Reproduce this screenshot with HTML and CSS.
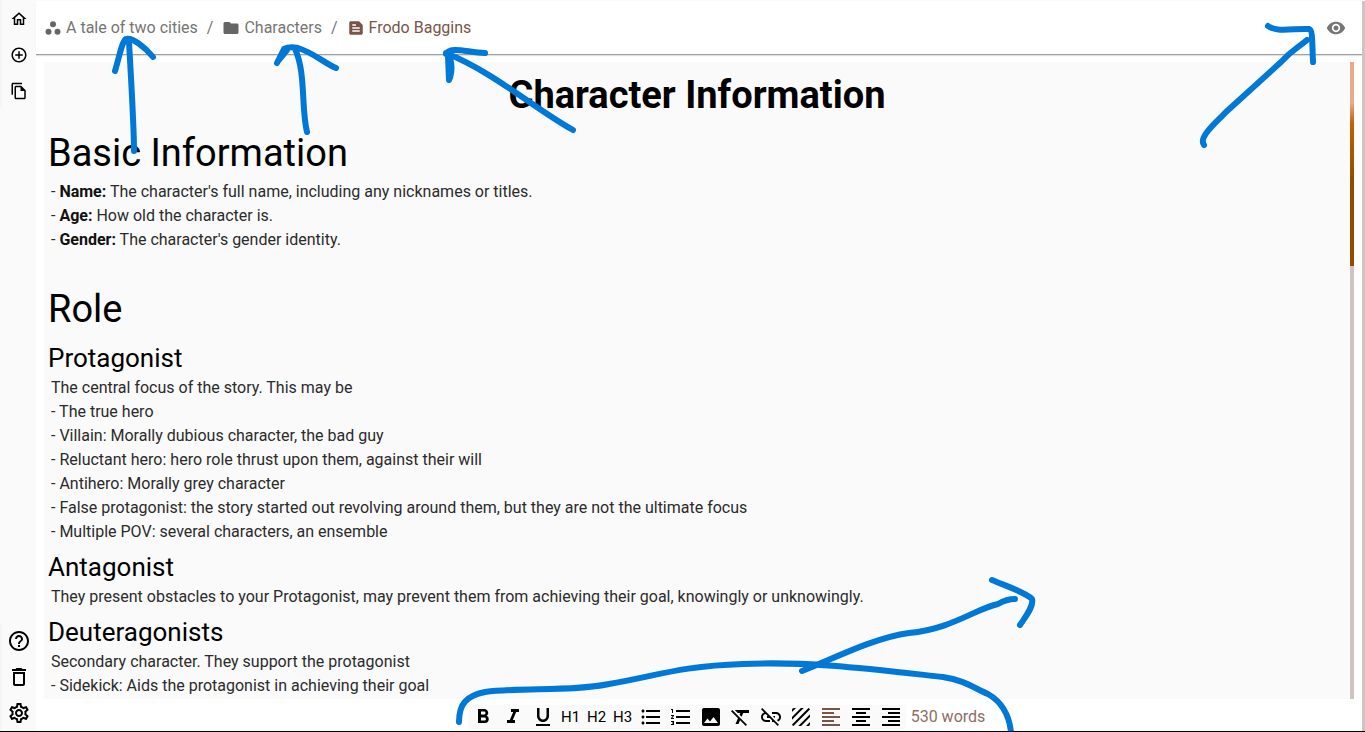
FILE: index.html
```html
<!DOCTYPE html>
<html lang="en">
<head>
<meta charset="utf-8">
<title>Frodo Baggins</title>
<link rel="stylesheet" href="styles.css">
</head>
<body>
<div class="app">
  <nav class="sidebar" aria-label="Main">
    <div class="side-group side-top">
      <button class="side-btn" aria-label="Home"><svg class="icon-sm" viewBox="0 0 24 24"><path d="M12 5.700l5 4.500V18h-2v-6H9v6H7v-7.800l5-4.500M12 3L2 12h3v8h6v-6h2v6h6v-8h3L12 3z"/></svg></button>
      <button class="side-btn" aria-label="Add"><svg class="icon-sm" viewBox="0 0 24 24"><path d="M13 7h-2v4H7v2h4v4h2v-4h4v-2h-4V7zm-1-5C6.500 2 2 6.500 2 12s4.500 10 10 10 10-4.500 10-10S17.500 2 12 2zm0 18c-4.400 0-8-3.600-8-8s3.600-8 8-8 8 3.600 8 8-3.600 8-8 8z"/></svg></button>
      <button class="side-btn" aria-label="Copy"><svg class="icon-sm" viewBox="0 0 24 24"><path d="M16 1H4c-1.100 0-2 .9-2 2v14h2V3h12V1zm-1 4H8c-1.100 0-2 .9-2 2v14c0 1.100.9 2 2 2h11c1.100 0 2-.9 2-2V11l-6-6zM8 21V7h6v5h5v9H8z"/></svg></button>
    </div>
    <div class="side-group side-bottom">
      <button class="side-btn" aria-label="Help"><svg class="icon" viewBox="0 0 24 24"><path d="M11 18h2v-2h-2v2zm1-16C6.480 2 2 6.480 2 12s4.480 10 10 10 10-4.480 10-10S17.520 2 12 2zm0 18c-4.410 0-8-3.590-8-8s3.590-8 8-8 8 3.590 8 8-3.590 8-8 8zm0-14c-2.210 0-4 1.790-4 4h2c0-1.100.9-2 2-2s2 .9 2 2c0 2-3 1.750-3 5h2c0-2.250 3-2.500 3-5 0-2.210-1.790-4-4-4z"/></svg></button>
      <button class="side-btn" aria-label="Delete"><svg class="icon" viewBox="0 0 24 24"><path d="M6 19c0 1.100.9 2 2 2h8c1.100 0 2-.9 2-2V7H6v12zM8 9h8v10H8V9zm7.500-5l-1-1h-5l-1 1H5v2h14V4h-3.500z"/></svg></button>
      <button class="side-btn" aria-label="Settings"><svg class="icon" viewBox="0 0 24 24"><path d="M19.430 12.980c.04-.32.07-.64.07-.98s-.03-.66-.07-.98l2.110-1.650c.19-.15.24-.42.12-.64l-2-3.460c-.12-.22-.39-.3-.61-.22l-2.490 1c-.52-.4-1.080-.73-1.690-.98l-.38-2.650C14.460 2.180 14.250 2 14 2h-4c-.25 0-.46.18-.49.42l-.38 2.650c-.61.25-1.170.59-1.690.98l-2.490-1c-.23-.09-.49 0-.61.22l-2 3.460c-.13.22-.07.49.12.64l2.110 1.650c-.04.32-.07.65-.07.98s.03.66.07.98l-2.110 1.650c-.19.15-.24.42-.12.64l2 3.460c.12.22.39.3.61.22l2.490-1c.52.4 1.080.73 1.690.98l.38 2.650c.03.24.24.42.49.42h4c.25 0 .46-.18.49-.42l.38-2.650c.61-.25 1.170-.59 1.690-.98l2.490 1c.23.09.49 0 .61-.22l2-3.460c.12-.22.07-.49-.12-.64l-2.110-1.650zm-1.980-1.710c.04.31.05.52.05.73s-.02.43-.05.73l-.14 1.130.89.7 1.080.84-.7 1.210-1.270-.51-1.040-.42-.9.68c-.43.32-.84.56-1.250.73l-1.060.43-.16 1.130-.2 1.350h-1.400l-.19-1.350-.16-1.130-1.060-.43c-.43-.18-.83-.41-1.230-.71l-.91-.7-1.060.43-1.270.51-.7-1.210 1.080-.84.89-.7-.14-1.130c-.03-.31-.05-.54-.05-.74s.02-.43.05-.73l.14-1.130-.89-.7-1.080-.84.7-1.210 1.270.51 1.040.42.9-.68c.43-.32.84-.56 1.250-.73l1.060-.43.16-1.130.2-1.350h1.390l.19 1.350.16 1.130 1.060.43c.43.18.83.41 1.230.71l.91.7 1.060-.43 1.270-.51.7 1.210-1.070.85-.89.7.14 1.130zM12 8c-2.210 0-4 1.790-4 4s1.790 4 4 4 4-1.790 4-4-1.790-4-4-4zm0 6c-1.100 0-2-.9-2-2s.9-2 2-2 2 .9 2 2-.9 2-2 2z"/></svg></button>
    </div>
  </nav>

  <main class="main">
    <header class="header">
      <nav class="crumbs" aria-label="Breadcrumb">
        <a class="crumb" href="#"><svg class="crumb-icon" viewBox="0 0 24 24"><circle cx="6" cy="17" r="4"/><circle cx="18" cy="17" r="4"/><circle cx="12" cy="7" r="4"/></svg>A tale of two cities</a>
        <span class="slash">/</span>
        <a class="crumb" href="#"><svg class="crumb-icon" viewBox="0 0 24 24"><path d="M10 4H4c-1.100 0-2 .9-2 2v12c0 1.100.9 2 2 2h16c1.100 0 2-.9 2-2V8c0-1.100-.9-2-2-2h-8l-2-2z"/></svg>Characters</a>
        <span class="slash">/</span>
        <a class="crumb crumb-current" href="#" aria-current="page"><svg class="crumb-icon" viewBox="0 0 24 24"><path d="M16 3H5c-1.100 0-2 .9-2 2v14c0 1.100.9 2 2 2h14c1.100 0 2-.9 2-2V8l-5-5zM7 7h5v2H7V7zm10 10H7v-2h10v2zm0-4H7v-2h10v2z"/></svg>Frodo Baggins</a>
      </nav>
      <button class="view-btn" aria-label="Preview"><svg class="view-icon" viewBox="0 0 24 24"><path d="M12 4.500C7 4.500 2.730 7.610 1 12c1.730 4.390 6 7.500 11 7.500s9.270-3.110 11-7.500c-1.730-4.390-6-7.500-11-7.500zM12 17c-2.760 0-5-2.240-5-5s2.240-5 5-5 5 2.240 5 5-2.240 5-5 5zm0-8c-1.660 0-3 1.340-3 3s1.340 3 3 3 3-1.340 3-3-1.340-3-3-3z"/></svg></button>
    </header>

    <div class="editor">
      <article class="doc">
        <h1 class="doc-title">Character Information</h1>
        <h2 class="doc-h1">Basic Information</h2>
        <p>- <b>Name:</b> The character's full name, including any nicknames or titles.</p>
        <p>- <b>Age:</b> How old the character is.</p>
        <p>- <b>Gender:</b> The character's gender identity.</p>
        <p><br></p>
        <h2 class="doc-h1">Role</h2>
        <h3 class="doc-h2">Protagonist</h3>
        <p>The central focus of the story. This may be</p>
        <p>- The true hero</p>
        <p>- Villain: Morally dubious character, the bad guy</p>
        <p>- Reluctant hero: hero role thrust upon them, against their will</p>
        <p>- Antihero: Morally grey character</p>
        <p>- False protagonist: the story started out revolving around them, but they are not the ultimate focus</p>
        <p>- Multiple POV: several characters, an ensemble</p>
        <h3 class="doc-h2">Antagonist</h3>
        <p>They present obstacles to your Protagonist, may prevent them from achieving their goal, knowingly or unknowingly.</p>
        <h3 class="doc-h2">Deuteragonists</h3>
        <p>Secondary character. They support the protagonist</p>
        <p>- Sidekick: Aids the protagonist in achieving their goal</p>
      </article>
      <div class="track"><div class="thumb"></div></div>
    </div>

    <footer class="footer">
      <div class="toolbar" role="toolbar" aria-label="Formatting">
        <button class="tool" aria-label="Bold"><svg class="icon" viewBox="0 0 24 24"><path d="M15.600 10.790c.97-.67 1.650-1.770 1.650-2.790 0-2.260-1.750-4-4-4H7v14h7.040c2.090 0 3.710-1.700 3.710-3.790 0-1.520-.86-2.820-2.150-3.420zM10 6.500h3c.83 0 1.500.67 1.500 1.500s-.67 1.500-1.500 1.500h-3v-3zm3.500 9H10v-3h3.500c.83 0 1.500.67 1.500 1.500s-.67 1.500-1.500 1.500z"/></svg></button>
        <button class="tool" aria-label="Italic"><svg class="icon" viewBox="0 0 24 24"><path d="M10 4v3h2.210l-3.420 8H6v3h8v-3h-2.210l3.420-8H18V4z"/></svg></button>
        <button class="tool" aria-label="Underline"><svg class="icon" viewBox="0 0 24 24"><path d="M12 17c3.310 0 6-2.690 6-6V3h-2.500v8c0 1.930-1.570 3.500-3.500 3.500S8.500 12.930 8.500 11V3H6v8c0 3.310 2.690 6 6 6zm-7 2v2h14v-2H5z"/></svg></button>
        <button class="tool-text">H1</button>
        <button class="tool-text">H2</button>
        <button class="tool-text">H3</button>
        <button class="tool" aria-label="Bulleted list"><svg class="icon" viewBox="0 0 24 24"><path d="M4 10.500c-.83 0-1.500.67-1.500 1.500s.67 1.500 1.500 1.500 1.500-.67 1.500-1.500-.67-1.500-1.500-1.500zm0-6c-.83 0-1.500.67-1.500 1.500S3.170 7.500 4 7.500 5.500 6.830 5.500 6 4.830 4.500 4 4.500zm0 12c-.83 0-1.500.68-1.500 1.500s.68 1.500 1.500 1.500 1.500-.68 1.500-1.500-.67-1.500-1.500-1.500zM7 19h14v-2H7v2zm0-6h14v-2H7v2zm0-8v2h14V5H7z"/></svg></button>
        <button class="tool" aria-label="Numbered list"><svg class="icon" viewBox="0 0 24 24"><path d="M2 17h2v.5H3v1h1v.5H2v1h3v-4H2v1zm1-9h1V4H2v1h1v3zm-1 3h1.800L2 13.100v.9h3v-1H3.200L5 10.900V10H2v1zm5-6v2h14V5H7zm0 14h14v-2H7v2zm0-6h14v-2H7v2z"/></svg></button>
        <button class="tool" aria-label="Image"><svg class="icon" viewBox="0 0 24 24"><path d="M21 19V5c0-1.100-.9-2-2-2H5c-1.100 0-2 .9-2 2v14c0 1.100.9 2 2 2h14c1.100 0 2-.9 2-2zM8.500 13.500l2.500 3.010L14.500 12l4.500 6H5l3.500-4.500z"/></svg></button>
        <button class="tool" aria-label="Clear formatting"><svg class="icon" viewBox="0 0 24 24"><path d="M3.270 5L2 6.270l6.970 6.970L6.500 19h3l1.570-3.660L16.730 21 18 19.730 3.550 5.270 3.270 5zM6 5v.18L8.820 8h2.400l-.72 1.680 2.100 2.100L14.210 8H20V5H6z"/></svg></button>
        <button class="tool" aria-label="Remove link"><svg class="icon" viewBox="0 0 24 24"><path d="M17 7h-4v1.900h4c1.710 0 3.100 1.390 3.100 3.100 0 1.430-.98 2.630-2.310 2.980l1.460 1.460C20.880 15.610 22 13.950 22 12c0-2.760-2.240-5-5-5zm-1 4h-2.190l2 2H16v-2zM2 4.270l3.110 3.110C3.290 8.120 2 9.910 2 12c0 2.760 2.240 5 5 5h4v-1.900H7c-1.710 0-3.100-1.390-3.100-3.100 0-1.590 1.210-2.900 2.760-3.070L8.730 11H8v2h2.730L13 15.270V17h1.730l4.010 4L20 19.740 3.270 3 2 4.270z"/></svg></button>
        <button class="tool" aria-label="Texture"><svg class="icon" viewBox="0 0 24 24"><path d="M19.510 3.080L3.080 19.510c.09.34.27.65.51.9.25.24.56.42.9.51L20.930 4.490c-.19-.69-.73-1.230-1.420-1.410zM11.880 3L3 11.880v2.830L14.710 3h-2.830zM5 3c-1.100 0-2 .9-2 2v2l4-4H5zm14 18c.55 0 1.050-.22 1.410-.59.37-.36.59-.86.59-1.410v-2l-4 4h2zm-9.710 0h2.830L21 12.120V9.290L9.290 21z"/></svg></button>
        <button class="tool tool-active" aria-label="Align left" aria-pressed="true"><svg class="icon" viewBox="0 0 24 24"><path d="M15 15H3v2h12v-2zm0-8H3v2h12V7zM3 13h18v-2H3v2zm0 8h18v-2H3v2zM3 3v2h18V3H3z"/></svg></button>
        <button class="tool" aria-label="Align center"><svg class="icon" viewBox="0 0 24 24"><path d="M7 15v2h10v-2H7zm-4 6h18v-2H3v2zm0-8h18v-2H3v2zm4-6v2h10V7H7zM3 3v2h18V3H3z"/></svg></button>
        <button class="tool" aria-label="Align right"><svg class="icon" viewBox="0 0 24 24"><path d="M3 21h18v-2H3v2zm6-4h12v-2H9v2zm-6-4h18v-2H3v2zm6-4h12V7H9v2zM3 3v2h18V3H3z"/></svg></button>
      </div>
      <span class="words">530 words</span>
    </footer>
  </main>
  <div class="page-track"></div>

  <svg class="ink" viewBox="0 0 1365 732" aria-hidden="true">
    <path d="M134 151C134 125 131 80 129 41M115 71C119 58 122 41 126 39C132 37 145 47 153 57"/>
    <path d="M307 132C301 108 306 72 295 49M277 63L284 49C288 47 293 47 298 48C314 53 324 63 336 68M278 61L287 50"/>
    <path d="M573 130C532 107 495 73 446 53M446 54C450 46 466 52 485 53M448 56L449 80M450 58Q453 68 450 78"/>
    <path d="M1204 145C1198 137 1216 123 1226 112L1281 62C1292 50 1299 47 1307 40M1268 26C1277 33 1296 28 1309 29C1313 30 1312 43 1313 62"/>
    <path d="M802 671C829 661 872 638 909 633C952 629 977 608 998 604C1005 600 1009 599 1015 599M992 580C1006 586 1025 592 1032 599C1034 606 1026 616 1020 625"/>
    <path d="M459 722C459 704 466 696 485 692C525 687 569 692 609 684C656 676 680 666 743 664C809 661 871 669 943 677C964 680 974 688 988 694C1002 702 1009 714 1011 732"/>
  </svg>
</div>
</body>
</html>
```

FILE: styles.css
```css
* { box-sizing: border-box; }
body {
  margin: 0;
  font-family: Roboto, "Liberation Sans", sans-serif;
  font-size: 16px;
  line-height: 24px;
  color: #2b2b2b;
  background: #fff;
}
button {
  display: flex;
  align-items: center;
  justify-content: center;
  padding: 0;
  border: 0;
  background: none;
  color: inherit;
  font: inherit;
}
svg { fill: currentColor; flex: none; }
h1, h2, h3, p { margin: 0; }

.app {
  position: relative;
  display: flex;
  height: 100vh;
  overflow: hidden;
  border-top: 1px solid #fafafa;
  border-bottom: 1px solid #000;
}

.sidebar {
  display: flex;
  flex-direction: column;
  justify-content: space-between;
  width: 36px;
  background: #fafafa;
  color: #000;
}
.side-group { border-left: 2px solid #f5f5f5; }
.side-btn { width: 34px; height: 36px; }
.icon-sm { width: 18px; height: 18px; }
.icon { width: 24px; height: 24px; }

.main {
  flex: 1;
  min-width: 0;
  display: flex;
  flex-direction: column;
}
.header {
  display: flex;
  align-items: center;
  justify-content: space-between;
  height: 54px;
  padding: 0 16px 0 8px;
  border-bottom: 1px solid #a0a0a0;
  box-shadow: 0 1px 1px #e0e0e0;
  color: #757575;
}
.crumbs { display: flex; align-items: center; gap: 9px; }
.crumb {
  display: flex;
  align-items: center;
  gap: 4px;
  color: #757575;
  text-decoration: none;
}
.crumb-icon { width: 18px; height: 18px; fill: #666; }
.view-icon { width: 20px; height: 20px; }
.crumb-current { color: #795548; }
.crumb-current .crumb-icon { fill: #795548; }

.editor {
  flex: 1;
  min-height: 0;
  display: flex;
  margin: 7px 8px 0;
  background: #fafafa;
}
.doc {
  flex: 1;
  padding: 10px 4px 0;
  overflow: hidden;
}
.doc p { padding-left: 3px; }
.doc b { color: #111; font-weight: 700; }
.doc-title, .doc-h1 {
  font-size: 38px;
  line-height: 46px;
  color: #000;
}
.doc-title { font-weight: 700; text-align: center; margin-bottom: 12px; }
.doc-h1 { font-weight: 400; margin: 10px 0 4px; }
.doc-h2 {
  font-size: 26px;
  line-height: 32px;
  font-weight: 400;
  color: #000;
  margin: 7px 0 2px;
}
.doc-h1 + .doc-h2 { margin-top: 10px; }

.track { width: 4px; background: #d0c4c2; }
.thumb {
  height: 32%;
  background: linear-gradient(#e8aa88 0 20%, #c46200 30%, #944b00 58%);
}

.footer {
  display: flex;
  align-items: center;
  justify-content: center;
  gap: 5px;
  height: 32px;
  padding: 4px 0 0 55px;
}
.toolbar {
  display: flex;
  background: #fafafa;
  color: #000;
}
.tool { width: 30px; height: 24px; }
.tool-text { width: 26px; height: 24px; font-size: 15px; }
.tool-active { color: #795548; }
.words { color: #8d6e63; }

.page-track { width: 3px; background: #d0c4c2; }

.ink {
  position: absolute;
  top: -1px;
  left: 0;
  width: 100%;
  height: 100vh;
  pointer-events: none;
  fill: none;
  stroke: #0078d7;
  stroke-width: 6;
  stroke-linecap: round;
  stroke-linejoin: round;
}
```
